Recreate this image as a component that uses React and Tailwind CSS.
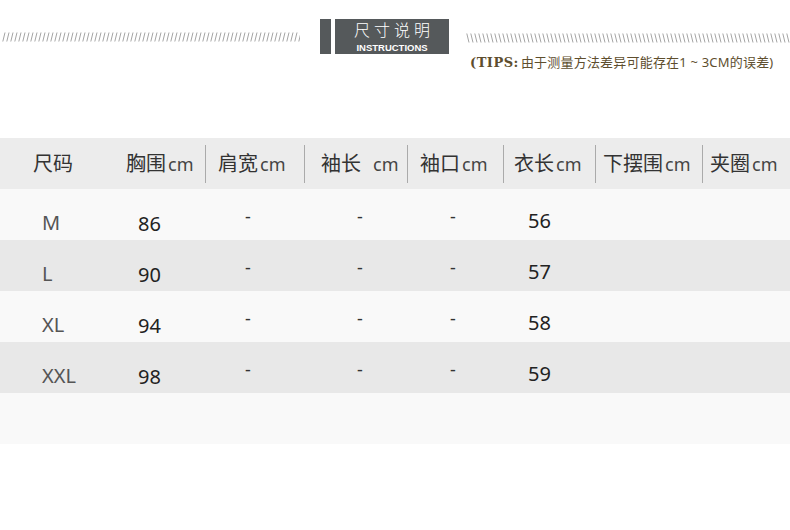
const cols = [
  "w-[100px]",
  "w-[105px]",
  "w-[99px]",
  "w-[103px]",
  "w-[96px]",
  "w-[92px]",
  "w-[107px]",
  "w-[88px]",
];

const heads = [
  { zh: "胸围", pad: "pl-[26px]" },
  { zh: "肩宽", pad: "pl-[12px]", sep: true },
  { zh: "袖长", pad: "pl-[16px]", sep: true, space: true },
  { zh: "袖口", pad: "pl-[12px]", sep: true },
  { zh: "衣长", pad: "pl-[10px]", sep: true },
  { zh: "下摆围", pad: "pl-[7px]", sep: true },
  { zh: "夹圈", pad: "pl-[7px]", sep: true },
];

const rows = [
  { size: "M", chest: "86", len: "56" },
  { size: "L", chest: "90", len: "57" },
  { size: "XL", chest: "94", len: "58" },
  { size: "XXL", chest: "98", len: "59" },
];

const Hatch = ({ width, back }) => (
  <svg width={width} height="10" className="block">
    <defs>
      <pattern id={back ? "hb" : "hf"} width="4" height="10" patternUnits="userSpaceOnUse">
        {back ? (
          <line x1="0.8" y1="0.5" x2="3" y2="9.5" stroke="#9a9a9a" strokeWidth="0.9" />
        ) : (
          <line x1="3" y1="0.5" x2="0.8" y2="9.5" stroke="#9a9a9a" strokeWidth="0.9" />
        )}
      </pattern>
    </defs>
    <rect width={width} height="10" fill={`url(#${back ? "hb" : "hf"})`} />
  </svg>
);

const Dash = ({ pad }) => (
  <div className={`${pad} pt-[2px] text-[18px] leading-none text-[#333]`}>-</div>
);

export default function App() {
  return (
    <div className="w-[790px] h-[530px] bg-white font-['Noto_Sans','Noto_Sans_CJK_SC',sans-serif] overflow-hidden">
      <div className="h-[138px] pt-[19px] flex">
        <div className="w-[320px] pt-[13px] pl-[2px]">
          <Hatch width={298} />
        </div>
        <div className="flex h-[35px] gap-[4px]">
          <div className="w-[11px] bg-[#55595b]" />
          <div className="w-[114px] bg-[#55595b] flex flex-col items-center">
            <div className="text-[16px] leading-[23px] tracking-[4px] pl-[4px] text-white font-light">尺寸说明</div>
            <div className="text-[9.5px] leading-[11px] font-bold text-white font-['Liberation_Sans',sans-serif]">INSTRUCTIONS</div>
          </div>
        </div>
        <div className="ml-[17px] flex-1 pt-[14px]">
          <Hatch width={324} back />
          <div className="mt-[11px] pl-[4px] text-[13px] leading-[16px] tracking-[0.2px] text-[#5e4e2e] whitespace-nowrap">
            <span className="font-bold font-['DejaVu_Serif',serif] text-[13px] tracking-[0.5px]">(TIPS:</span>
            <span className="ml-[2px]">由于测量方法差异可能存在1 ~ 3CM的误差)</span>
          </div>
        </div>
      </div>

      <div className="flex h-[51px] bg-[#ececec] items-center text-[#333]">
        <div className={`${cols[0]} pl-[33px] text-[20px]`}>尺码</div>
        {heads.map((h, i) => (
          <div key={h.zh} className={`${cols[i + 1]} flex items-center h-full`}>
            {h.sep && <div className="w-px h-[38px] bg-[#aaa]" />}
            <div className={`${h.pad} flex items-baseline whitespace-nowrap`}>
              <span className="text-[20px]">{h.zh}</span>
              <span className={`text-[18px] text-[#444] ${h.space ? "ml-[12px]" : "ml-[2px]"}`}>cm</span>
            </div>
          </div>
        ))}
      </div>

      {rows.map((r, i) => (
        <div
          key={r.size}
          className={`flex h-[51px] items-center ${i % 2 === 0 ? "bg-[#f9f9f9]" : "bg-[#e8e8e8]"}`}
        >
          <div className={`${cols[0]} pl-[42px] pt-[16px] text-[20px] text-[#555]`}>{r.size}</div>
          <div className={`${cols[1]} pl-[38px] pt-[18px] text-[20px] text-[#222]`}>{r.chest}</div>
          <div className={cols[2]}><Dash pad="pl-[40px]" /></div>
          <div className={cols[3]}><Dash pad="pl-[53px]" /></div>
          <div className={cols[4]}><Dash pad="pl-[43px]" /></div>
          <div className={`${cols[5]} pl-[25px] pt-[12px] text-[20px] text-[#222]`}>{r.len}</div>
          <div className={cols[6]} />
          <div className={cols[7]} />
        </div>
      ))}
      <div className="h-[51px] bg-[#f9f9f9]" />
    </div>
  );
}
